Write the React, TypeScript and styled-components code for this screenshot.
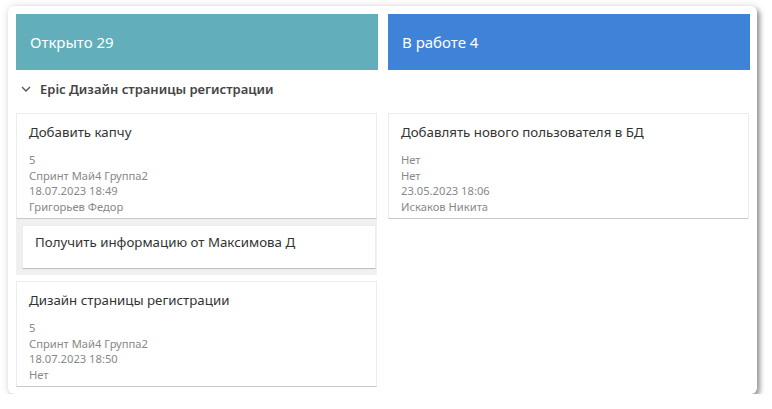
import React from "react";
import styled, { createGlobalStyle } from "styled-components";

const GlobalStyle = createGlobalStyle`
  body {
    margin: 0;
    background: #ffffff;
    font-family: "Noto Sans", "Open Sans", sans-serif;
  }
`;

const Board = styled.div`
  margin: 6px 0 0 8px;
  width: 749px;
  height: 388px;
  box-sizing: border-box;
  padding: 8px 7px 8px 8px;
  background: #fff;
  border-radius: 6px;
  box-shadow: 3px 3px 5px rgba(0, 0, 0, 0.38), 0 0 8px rgba(0, 0, 0, 0.12);
  display: grid;
  grid-template-columns: 362px 362px;
  column-gap: 10px;
  align-items: start;
`;

const Column = styled.div`
  display: flex;
  flex-direction: column;
`;

const ColumnHeader = styled.div<{ $color: string }>`
  height: 56px;
  background: ${(p) => p.$color};
  color: #fff;
  font-size: 15px;
  display: flex;
  align-items: center;
  padding-left: 14px;
`;

const EpicRow = styled.div`
  height: 38px;
  margin-bottom: 5px;
  display: flex;
  align-items: center;
  padding-left: 4px;
  gap: 8px;
  font-size: 13px;
  font-weight: 600;
  color: #444;
`;

const Card = styled.div`
  width: 361px;
  box-sizing: border-box;
  border: 1px solid #ececec;
  border-bottom-color: #c9c9c9;
  background: #fff;
  padding: 10px 12px 4px;
`;

const Title = styled.div`
  font-size: 13.3px;
  line-height: 17px;
  color: #333;
`;

const Meta = styled.div`
  margin-top: 11px;
  font-size: 11.2px;
  line-height: 15.5px;
  color: #888;
`;

const SubGroup = styled.div`
  width: 361px;
  box-sizing: border-box;
  background: #f0f0f0;
  padding: 6px 1px 6px 6px;
  margin-bottom: 6px;
`;

const SubCard = styled.div`
  height: 44px;
  box-sizing: border-box;
  background: #fff;
  border: 1px solid #ececec;
  border-bottom-color: #bdbdbd;
  padding: 8px 12px 0;
  font-size: 13.3px;
  line-height: 17px;
  color: #333;
`;

type Task = { title: string; meta: string[] };

const TaskCard: React.FC<{ task: Task }> = ({ task }) => (
  <Card>
    <Title>{task.title}</Title>
    <Meta>
      {task.meta.map((m, i) => (
        <div key={i}>{m}</div>
      ))}
    </Meta>
  </Card>
);

const Chevron = () => (
  <svg width="12" height="10" viewBox="0 0 12 10">
    <path d="M2 3 L6 7 L10 3" fill="none" stroke="#555" strokeWidth="1.4" />
  </svg>
);

export default function App() {
  return (
    <>
      <GlobalStyle />
      <Board>
        <Column>
          <ColumnHeader $color="#62aebb">Открыто 29</ColumnHeader>
          <EpicRow>
            <Chevron />
            <span>Epic Дизайн страницы регистрации</span>
          </EpicRow>
          <TaskCard
            task={{
              title: "Добавить капчу",
              meta: ["5", "Спринт Май4 Группа2", "18.07.2023 18:49", "Григорьев Федор"],
            }}
          />
          <SubGroup>
            <SubCard>Получить информацию от Максимова Д</SubCard>
          </SubGroup>
          <TaskCard
            task={{
              title: "Дизайн страницы регистрации",
              meta: ["5", "Спринт Май4 Группа2", "18.07.2023 18:50", "Нет"],
            }}
          />
        </Column>
        <Column>
          <ColumnHeader $color="#3f83d8">В работе 4</ColumnHeader>
          <EpicRow />
          <TaskCard
            task={{
              title: "Добавлять нового пользователя в БД",
              meta: ["Нет", "Нет", "23.05.2023 18:06", "Искаков Никита"],
            }}
          />
        </Column>
      </Board>
    </>
  );
}
